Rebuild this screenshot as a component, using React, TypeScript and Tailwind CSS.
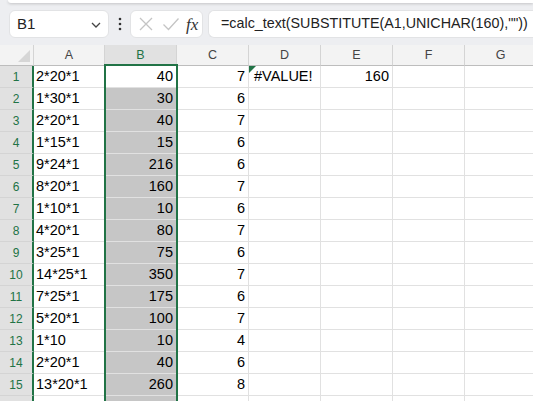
import React from "react";

const A = ["2*20*1","1*30*1","2*20*1","1*15*1","9*24*1","8*20*1","1*10*1","4*20*1","3*25*1","14*25*1","7*25*1","5*20*1","1*10","2*20*1","13*20*1",""];
const B = ["40","30","40","15","216","160","10","80","75","350","175","100","10","40","260",""];
const C = ["7","6","7","6","6","7","6","7","6","7","6","7","4","6","8",""];

const cellBase = "h-[22px] shrink-0 border-r border-b border-[#e1e1e1] flex items-center overflow-hidden whitespace-nowrap";

function Row({ i }: { i: number }) {
  const n = i + 1;
  return (
    <div className="flex h-[22px]">
      <div className="w-[34px] h-[22px] shrink-0 bg-[#e1e1e1] border-b border-[#d4d4d4] border-r-2 border-r-[#217346] flex items-center justify-center text-[12px] text-[#217346]">
        {n <= 15 ? n : ""}
      </div>
      <div className={`${cellBase} w-[71px] pl-[2px]`}>{A[i]}</div>
      <div className={`${cellBase} w-[72px] justify-end pr-[3px] ${i === 0 ? "bg-white" : "bg-[#c6c6c6] border-[#c6c6c6]"}`}>{B[i]}</div>
      <div className={`${cellBase} w-[72px] justify-end pr-[3px]`}>{C[i]}</div>
      <div className={`${cellBase} w-[72px] pl-[5px] relative`}>
        {i === 0 && (
          <>
            <span className="absolute left-0 top-0 w-0 h-0 border-t-[7px] border-t-[#217346] border-r-[7px] border-r-transparent" />
            #VALUE!
          </>
        )}
      </div>
      <div className={`${cellBase} w-[72px] justify-end pr-[3px]`}>{i === 0 ? "160" : ""}</div>
      <div className={`${cellBase} w-[72px]`}></div>
      <div className={`${cellBase} w-[72px]`}></div>
    </div>
  );
}

export default function App() {
  const hdr = "h-[21px] shrink-0 border-r border-b border-[#d4d4d4] border-b-[#bdbdbd] flex items-center justify-center text-[12.5px] text-[#444]";
  return (
    <div
      className="w-[533px] h-[401px] overflow-hidden bg-[#edeef1] relative"
      style={{ fontFamily: '"Liberation Sans", Arial, sans-serif' }}
    >
      {/* top panel edge */}
      <div className="h-[3px] ml-[8px] bg-white rounded-bl-lg shadow-[0_1px_3px_rgba(0,0,0,0.18)]" />

      {/* formula bar */}
      <div className="h-[42px] flex items-start pt-[7px]">
        <div className="ml-[9px] w-[100px] h-[28px] bg-white rounded-[6px] border border-[#e2e3e5] flex items-center justify-between pl-[7px] pr-[6px] text-[15px] text-[#222]">
          <span>B1</span>
          <svg width="12" height="12" viewBox="0 0 12 12" className="mt-[2px]">
            <path d="M2 4 L6 8 L10 4" fill="none" stroke="#444" strokeWidth="1.3" />
          </svg>
        </div>
        <div className="w-[21px] h-[28px] flex items-center justify-center">
          <svg width="4" height="14" viewBox="0 0 4 14">
            <circle cx="2" cy="2" r="1.3" fill="#333" />
            <circle cx="2" cy="7" r="1.3" fill="#333" />
            <circle cx="2" cy="12" r="1.3" fill="#333" />
          </svg>
        </div>
        <div className="w-[73px] h-[28px] bg-white rounded-[6px] border border-[#e2e3e5] flex items-center pl-[5px]">
          <svg width="16" height="16" viewBox="0 0 16 16" className="ml-[2px]">
            <path d="M2 2 L14 14 M14 2 L2 14" stroke="#c4c4c4" strokeWidth="1.3" fill="none" />
          </svg>
          <svg width="18" height="16" viewBox="0 0 18 16" className="ml-[8px]">
            <path d="M1.5 8.5 L6.5 13.5 L16.5 2.5" stroke="#c4c4c4" strokeWidth="1.3" fill="none" />
          </svg>
          <span
            className="ml-[6px] text-[17px] italic text-[#333] leading-none"
            style={{ fontFamily: '"Liberation Serif", "Times New Roman", serif' }}
          >
            fx
          </span>
        </div>
        <div className="ml-[5px] flex-1 h-[28px] bg-white rounded-l-[6px] border border-r-0 border-[#e2e3e5] flex items-center pl-[12px] text-[14.3px] text-[#222] whitespace-nowrap overflow-hidden">
          =calc_text(SUBSTITUTE(A1,UNICHAR(160),""))
        </div>
      </div>

      {/* sheet */}
      <div className="bg-white text-[14.5px] text-black">
        <div className="flex bg-[#f3f3f3]">
          <div className="w-[34px] h-[21px] shrink-0 border-r border-b border-[#d4d4d4] border-b-[#bdbdbd] relative">
            <span className="absolute right-[3px] bottom-[3px] w-0 h-0 border-b-[12px] border-b-[#d6d6d6] border-l-[12px] border-l-transparent" />
          </div>
          <div className={`${hdr} w-[71px]`}>A</div>
          <div className={`${hdr} w-[72px] bg-[#e1e1e1] text-[#217346]`}>B</div>
          <div className={`${hdr} w-[72px]`}>C</div>
          <div className={`${hdr} w-[72px]`}>D</div>
          <div className={`${hdr} w-[72px]`}>E</div>
          <div className={`${hdr} w-[72px]`}>F</div>
          <div className={`${hdr} w-[72px]`}>G</div>
        </div>
        {A.map((_, i) => (
          <Row key={i} i={i} />
        ))}
      </div>

      {/* selection border overlay */}
      <div className="absolute left-[104px] top-[64px] w-[74px] h-[400px] border-2 border-[#217346] pointer-events-none" />
    </div>
  );
}
